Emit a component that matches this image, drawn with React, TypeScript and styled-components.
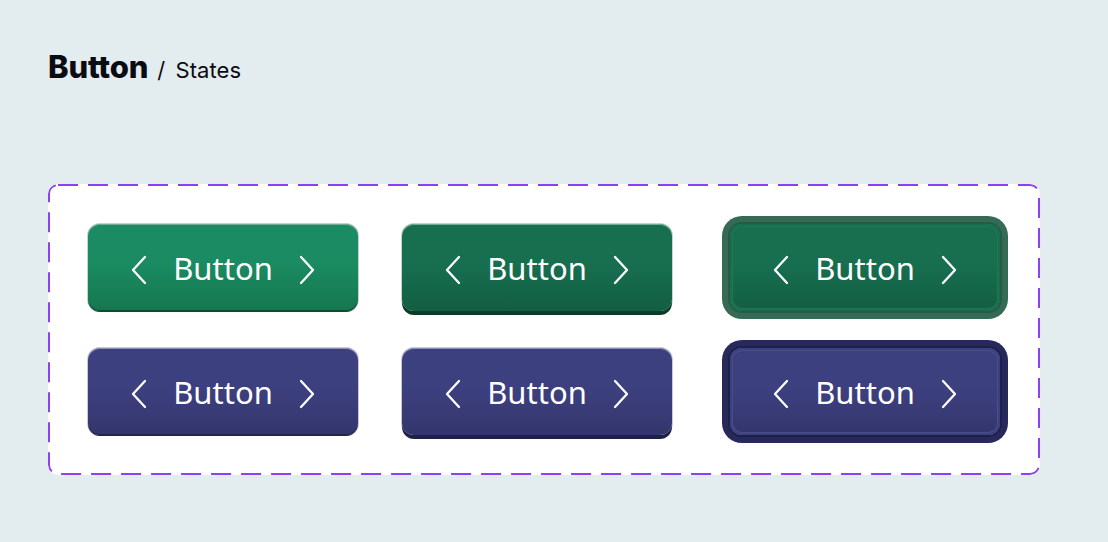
import React from "react";
import styled, { createGlobalStyle, css } from "styled-components";

const Global = createGlobalStyle`
  html, body { margin: 0; padding: 0; background: #e3ecee; }
  body { width: 1108px; height: 542px; overflow: hidden; }
`;

const Page = styled.div`
  padding: 48px 0 0 48px;
  box-sizing: border-box;
  height: 542px;
`;

const Title = styled.div`
  display: flex;
  align-items: baseline;
  gap: 9px;
  height: 38px;
  color: #0b0b12;
`;

const TitleMain = styled.span`
  font-family: Inter, "Liberation Sans", sans-serif;
  font-weight: 800;
  font-size: 31px;
  letter-spacing: -0.2px;
`;

const TitleSub = styled.span`
  font-family: Inter, "Liberation Sans", sans-serif;
  font-weight: 400;
  font-size: 22px;
  letter-spacing: 0.1px;
  word-spacing: 4px;
`;

const dash = encodeURIComponent(
  `<svg xmlns="http://www.w3.org/2000/svg" width="992" height="291"><rect x="1" y="1" width="990" height="289" rx="9" ry="9" fill="none" stroke="#8c42f2" stroke-width="2" stroke-dasharray="20 10"/></svg>`
);

const Board = styled.div`
  margin-top: 98px;
  width: 992px;
  height: 291px;
  box-sizing: border-box;
  background: #ffffff url("data:image/svg+xml,${dash}") no-repeat 0 0;
  border-radius: 10px;
  padding: 40px 0 0 40px;
  display: flex;
  flex-direction: column;
  gap: 37px;
`;

const Row = styled.div`
  display: flex;
  align-items: flex-start;
`;

type Tone = "green" | "purple";
type State = "default" | "pressed" | "focus";

const palette = {
  green: {
    top: "#1a8b62",
    bottom: "#16774f",
    pressTop: "#176f50",
    pressBottom: "#135e43",
    hi: "#6fae94",
    edge: "#0f4a33",
    shadow: "#0c3b28",
    ring: "#356a55",
    ringIn: "#285a44",
    inset: "#22765a",
  },
  purple: {
    top: "#3d407f",
    bottom: "#33366c",
    pressTop: "#3d407f",
    pressBottom: "#33366c",
    hi: "#8f91ba",
    edge: "#22244c",
    shadow: "#1e2046",
    ring: "#27295a",
    ringIn: "#1e2049",
    inset: "#4a4d8a",
  },
};

const Btn = styled.button<{ $tone: Tone; $state: State; $offset: number }>`
  flex: none;
  width: 270px;
  height: 87px;
  margin-left: ${(p) => p.$offset}px;
  box-sizing: border-box;
  border-radius: 12px;
  border: none;
  padding: 4px 0 0;
  display: flex;
  align-items: center;
  justify-content: center;
  gap: 24px;
  color: #ffffff;
  font-family: "Noto Sans", "Open Sans", sans-serif;
  font-size: 31px;
  font-weight: 400;
  cursor: pointer;
  ${(p) => {
    const c = palette[p.$tone];
    if (p.$state === "default")
      return css`
        background: linear-gradient(180deg, ${c.top} 0%, ${c.top} 45%, ${c.bottom} 100%);
        box-shadow: inset 0 1px 0 ${c.hi}, inset 0 -1px 0 ${c.edge}, 0 0 0 1px ${c.edge}40, 0 1px 0 ${c.edge};
      `;
    if (p.$state === "pressed")
      return css`
        background: linear-gradient(180deg, ${c.pressTop} 0%, ${c.pressTop} 45%, ${c.pressBottom} 100%);
        box-shadow: inset 0 1px 0 ${c.hi}, 0 0 0 1px ${c.edge}40, 0 4px 0 ${c.shadow};
      `;
    return css`
      background: linear-gradient(180deg, ${c.pressTop} 0%, ${c.pressTop} 45%, ${c.pressBottom} 100%);
      box-shadow: inset 0 0 0 2px ${c.pressTop}, inset 0 0 0 3px ${c.inset}, 0 0 0 2px ${c.ringIn}, 0 0 0 8px ${c.ring};
    `;
  }}
`;

const Label = styled.span`
  line-height: 1;
  padding: 0 1px 2px;
`;

const Chevron = ({ dir }: { dir: "left" | "right" }) => (
  <svg width="18" height="30" viewBox="0 0 18 30" fill="none">
    <polyline
      points={dir === "left" ? "15,2 3,15 15,28" : "3,2 15,15 3,28"}
      stroke="#ffffff"
      strokeWidth="2.3"
      strokeLinecap="round"
      strokeLinejoin="round"
    />
  </svg>
);

const Button = ({ tone, state, offset }: { tone: Tone; state: State; offset: number }) => (
  <Btn $tone={tone} $state={state} $offset={offset}>
    <Chevron dir="left" />
    <Label>Button</Label>
    <Chevron dir="right" />
  </Btn>
);

export default function App() {
  return (
    <>
      <Global />
      <Page>
        <Title>
          <TitleMain>Button</TitleMain>
          <TitleSub>/ States</TitleSub>
        </Title>
        <Board>
          {(["green", "purple"] as Tone[]).map((tone) => (
            <Row key={tone}>
              <Button tone={tone} state="default" offset={0} />
              <Button tone={tone} state="pressed" offset={44} />
              <Button tone={tone} state="focus" offset={58} />
            </Row>
          ))}
        </Board>
      </Page>
    </>
  );
}
